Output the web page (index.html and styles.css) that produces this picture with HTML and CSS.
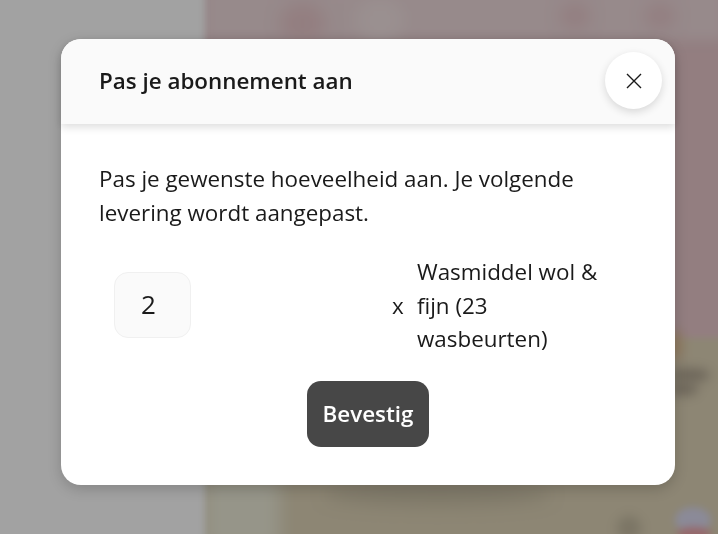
FILE: index.html
```html
<!DOCTYPE html>
<html lang="nl">
<head>
<meta charset="utf-8">
<title>Pas je abonnement aan</title>
<link rel="stylesheet" href="styles.css">
</head>
<body>
<div class="backdrop" aria-hidden="true">
  <div class="bg-left"></div>
  <div class="bg-page">
    <div class="bg-pink"></div>
    <div class="bg-beige"></div>
    <span class="blob top-band"></span>
    <span class="blob top-spot-a"></span>
    <span class="blob top-spot-b"></span>
    <span class="blob top-spot-c"></span>
    <span class="blob top-spot-d"></span>
    <span class="blob side-brown"></span>
    <span class="blob side-dark-a"></span>
    <span class="blob side-dark-b"></span>
    <span class="blob foot-light"></span>
    <span class="blob foot-dark"></span>
    <span class="blob foot-spot"></span>
    <span class="blob badge-blue"></span>
    <span class="blob badge-red"></span>
  </div>
</div>
<main class="modal">
  <header class="modal-head">
    <h1 class="modal-title">Pas je abonnement aan</h1>
    <button class="close" aria-label="Sluiten">
      <svg class="close-icon" viewBox="0 0 16 16" width="16" height="16"><path d="M1 1L15 15M15 1L1 15"/></svg>
    </button>
  </header>
  <section class="modal-body">
    <p class="intro">Pas je gewenste hoeveelheid aan. Je volgende levering wordt aangepast.</p>
    <div class="row">
      <div class="qty-cell"><div class="qty">2</div></div>
      <div class="times">x</div>
      <div class="name">Wasmiddel wol &amp; fijn (23 wasbeurten)</div>
    </div>
    <div class="actions"><button class="confirm">Bevestig</button></div>
  </section>
</main>
</body>
</html>
```
FILE: styles.css
```css
* { box-sizing: border-box; }
html, body { height: 100%; }
body {
  margin: 0;
  overflow: hidden;
  background: #a2a2a2;
  font-family: "Open Sans", "Liberation Sans", sans-serif;
  color: #1a1a1a;
  padding: 39px 43px 0 61px;
}
.backdrop { position: fixed; inset: 0; display: flex; overflow: hidden; }
.bg-left { width: 205px; background: #a2a2a2; }
.bg-page {
  flex: 1;
  margin: -12px -12px -12px 0;
  position: relative;
  overflow: hidden;
  display: flex;
  flex-direction: column;
  filter: blur(3px);
}
.bg-pink { height: 350px; background: #937e80; }
.bg-beige { flex: 1; background: #8d8674; }
.blob { position: absolute; border-radius: 50%; filter: blur(8px); }
.top-band { left: 0; top: 0; width: 520px; height: 52px; border-radius: 0; background: #978a8b; filter: blur(6px); }
.top-spot-a { left: 75px; top: 15px; width: 45px; height: 40px; background: #937e80; }
.top-spot-b { left: 150px; top: 10px; width: 50px; height: 45px; background: #9a9090; }
.top-spot-c { left: 355px; top: 15px; width: 30px; height: 26px; background: #937e80; }
.top-spot-d { left: 440px; top: 15px; width: 30px; height: 26px; background: #937e80; }
.side-brown { left: 462px; top: 342px; width: 16px; height: 30px; background: #8f7a60; filter: blur(4px); }
.side-dark-a { left: 465px; top: 380px; width: 40px; height: 14px; background: #6e675b; filter: blur(4px); }
.side-dark-b { left: 465px; top: 394px; width: 28px; height: 14px; background: #6e675b; filter: blur(4px); }
.foot-light { left: 0; top: 490px; width: 75px; height: 70px; border-radius: 0; background: #969589; }
.foot-dark { left: 120px; top: 496px; width: 225px; height: 22px; background: #7e7868; }
.foot-spot { left: 412px; top: 528px; width: 24px; height: 24px; background: #7b7565; filter: blur(4px); }
.badge-blue { left: 470px; top: 519px; width: 36px; height: 26px; background: #8b8a98; filter: blur(2px); }
.badge-red { left: 472px; top: 539px; width: 34px; height: 14px; background: #96676a; filter: blur(2px); }
.modal {
  position: relative;
  width: 614px;
  height: 446px;
  background: #fff;
  border-radius: 20px;
  box-shadow: 0 4px 14px rgba(0, 0, 0, .18);
}
.modal-head {
  height: 85px;
  padding: 0 13px 2px 38px;
  display: flex;
  align-items: center;
  justify-content: space-between;
  background: #fafafa;
  border-radius: 20px 20px 0 0;
  box-shadow: 0 3px 8px rgba(0, 0, 0, .14);
}
.modal-title { margin: 0; font-size: 22.4px; line-height: 30px; font-weight: 600; }
.close {
  width: 57px;
  height: 57px;
  padding: 0;
  border: 0;
  border-radius: 50%;
  background: #fff;
  box-shadow: 0 3px 8px rgba(0, 0, 0, .14);
  display: flex;
  align-items: center;
  justify-content: center;
}
.close-icon { fill: none; stroke: #1a1a1a; stroke-width: 1.4; }
.modal-body { padding: 38px 38px 0; }
.intro { margin: 0; font-size: 22.4px; line-height: 33.6px; }
.row { margin-top: 26px; display: flex; align-items: center; font-size: 22.4px; line-height: 33.6px; }
.qty-cell { width: 293px; padding: 0 0 2px 15px; }
.qty {
  width: 77px;
  height: 66px;
  padding-left: 26px;
  display: flex;
  align-items: center;
  background: #fafafa;
  border: 1px solid #f0f0f0;
  border-radius: 14px;
  font-size: 26px;
}
.times { width: 25px; }
.name { width: 200px; }
.actions { margin-top: 25px; display: flex; justify-content: center; }
.confirm {
  width: 122px;
  height: 66px;
  border: 0;
  border-radius: 14px;
  background: #474747;
  color: #fff;
  font: 600 22.4px/30px "Open Sans", "Liberation Sans", sans-serif;
}
```
